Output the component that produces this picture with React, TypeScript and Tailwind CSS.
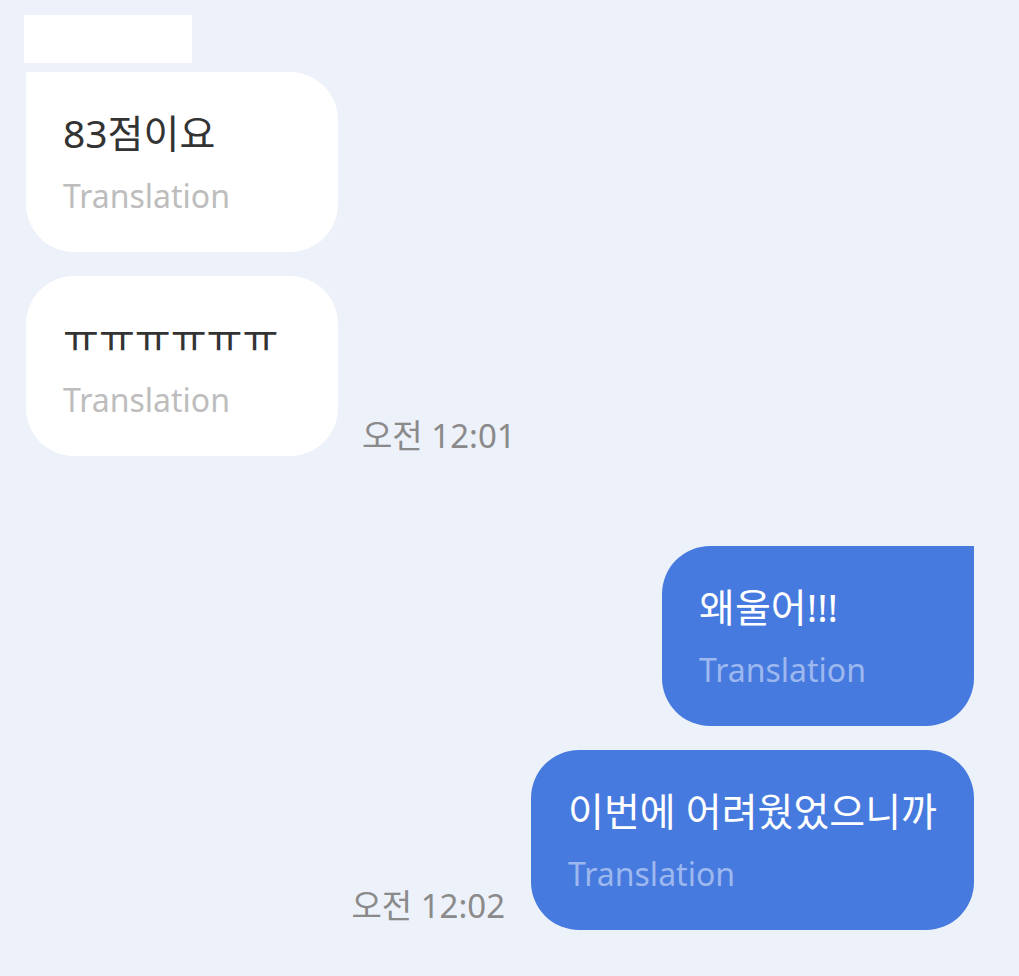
import React from 'react';

type Msg = { text: string; corner?: boolean };

const font = { fontFamily: '"Noto Sans", "Noto Sans CJK KR", sans-serif' };

const Bubble: React.FC<{ msg: Msg; mine?: boolean }> = ({ msg, mine }) => {
  const shape = mine
    ? msg.corner
      ? 'rounded-[48px] rounded-tr-none'
      : 'rounded-[48px]'
    : msg.corner
      ? 'rounded-[48px] rounded-tl-none'
      : 'rounded-[48px]';
  return (
    <div
      className={`min-w-[312px] h-[180px] px-[37px] pt-[37px] ${shape} ${
        mine ? 'bg-[#477ADE]' : 'bg-white'
      }`}
    >
      <div className={`text-[39px] leading-[48px] whitespace-nowrap ${mine ? 'text-white' : 'text-[#333333]'}`}>
        {msg.text}
      </div>
      <div className={`mt-[19px] text-[32px] leading-[40px] ${mine ? 'text-[#9DB8EF]' : 'text-[#BDBDBD]'}`}>
        Translation
      </div>
    </div>
  );
};

const Time: React.FC<{ value: string }> = ({ value }) => (
  <span className="text-[33px] leading-[36px] text-[#8A8A8A] whitespace-nowrap">{value}</span>
);

export default function App() {
  return (
    <div className="min-h-[976px] w-[1019px] bg-[#EDF1FA] pt-[15px] pl-[26px] pr-[45px]" style={font}>
      <div className="w-[168px] h-[48px] bg-white -ml-[2px]" />

      <div className="mt-[9px] flex flex-col gap-[24px]">
        <div className="flex">
          <Bubble msg={{ text: '83점이요', corner: true }} />
        </div>
        <div className="flex items-end gap-[24px]">
          <Bubble msg={{ text: 'ㅠㅠㅠㅠㅠㅠ' }} />
          <div className="pb-[2px]">
            <Time value="오전 12:01" />
          </div>
        </div>
      </div>

      <div className="mt-[90px] flex flex-col items-end gap-[24px]">
        <div className="flex">
          <Bubble mine msg={{ text: '왜울어!!!', corner: true }} />
        </div>
        <div className="flex items-end gap-[26px]">
          <div className="pb-[6px]">
            <Time value="오전 12:02" />
          </div>
          <Bubble mine msg={{ text: '이번에 어려웠었으니까' }} />
        </div>
      </div>
    </div>
  );
}
